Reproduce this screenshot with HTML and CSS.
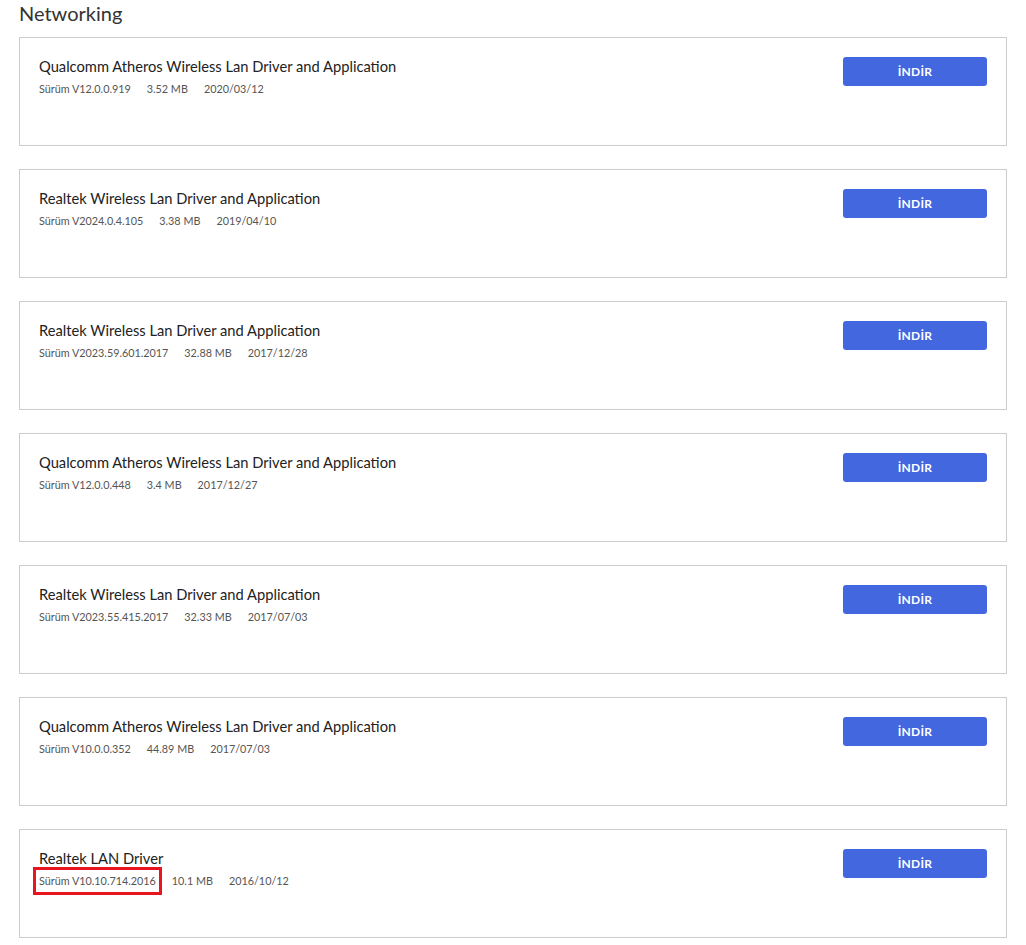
FILE: index.html
```html
<!DOCTYPE html>
<html>
<head>
  <title>Networking</title>
  <link rel="stylesheet" href="styles.css">
</head>
<body>

  <h2 class="section-title">Networking</h2>

  <div class="driver-list">
    <div class="driver">
      <div class="driver-info">
        <div class="driver-name">Qualcomm Atheros Wireless Lan Driver and Application</div>
        <div class="driver-meta">
          <span>Sürüm V12.0.0.919</span>
          <span>3.52 MB</span>
          <span>2020/03/12</span>
        </div>
      </div>
      <button class="download">İNDİR</button>
    </div>

    <div class="driver">
      <div class="driver-info">
        <div class="driver-name">Realtek Wireless Lan Driver and Application</div>
        <div class="driver-meta">
          <span>Sürüm V2024.0.4.105</span>
          <span>3.38 MB</span>
          <span>2019/04/10</span>
        </div>
      </div>
      <button class="download">İNDİR</button>
    </div>

    <div class="driver">
      <div class="driver-info">
        <div class="driver-name">Realtek Wireless Lan Driver and Application</div>
        <div class="driver-meta">
          <span>Sürüm V2023.59.601.2017</span>
          <span>32.88 MB</span>
          <span>2017/12/28</span>
        </div>
      </div>
      <button class="download">İNDİR</button>
    </div>

    <div class="driver">
      <div class="driver-info">
        <div class="driver-name">Qualcomm Atheros Wireless Lan Driver and Application</div>
        <div class="driver-meta">
          <span>Sürüm V12.0.0.448</span>
          <span>3.4 MB</span>
          <span>2017/12/27</span>
        </div>
      </div>
      <button class="download">İNDİR</button>
    </div>

    <div class="driver">
      <div class="driver-info">
        <div class="driver-name">Realtek Wireless Lan Driver and Application</div>
        <div class="driver-meta">
          <span>Sürüm V2023.55.415.2017</span>
          <span>32.33 MB</span>
          <span>2017/07/03</span>
        </div>
      </div>
      <button class="download">İNDİR</button>
    </div>

    <div class="driver">
      <div class="driver-info">
        <div class="driver-name">Qualcomm Atheros Wireless Lan Driver and Application</div>
        <div class="driver-meta">
          <span>Sürüm V10.0.0.352</span>
          <span>44.89 MB</span>
          <span>2017/07/03</span>
        </div>
      </div>
      <button class="download">İNDİR</button>
    </div>

    <div class="driver">
      <div class="driver-info">
        <div class="driver-name">Realtek LAN Driver</div>
        <div class="driver-meta">
          <span class="marked">Sürüm V10.10.714.2016</span>
          <span>10.1 MB</span>
          <span>2016/10/12</span>
        </div>
      </div>
      <button class="download">İNDİR</button>
    </div>
  </div>

</body>
</html>
```

FILE: styles.css
```css
body {
  margin: 0;
  padding: 0 19px;
  font-family: "Lato", "Open Sans", sans-serif;
  background-color: #fff;
  color: #222;
}

.section-title {
  margin: 0;
  padding-top: 1px;
  height: 37px;
  box-sizing: border-box;
  font-size: 20px;
  font-weight: 400;
  color: #333;
}

.driver-list {
  display: flex;
  flex-direction: column;
  gap: 23px;
  width: 988px;
}

.driver {
  display: flex;
  justify-content: space-between;
  align-items: flex-start;
  height: 109px;
  padding: 18px 19px 0 19px;
  border: 1px solid #ccc;
  box-sizing: border-box;
}

.driver-name {
  font-size: 14.7px;
  line-height: 20px;
  color: #222;
}

.driver-meta {
  display: flex;
  gap: 16px;
  margin-top: 5px;
  font-size: 10.8px;
  line-height: 16px;
  color: #555;
}

/* highlight around a version number */
.driver-meta .marked {
  outline: 3px solid #e8141f;
  outline-offset: 3px;
}

.download {
  width: 144px;
  height: 29px;
  margin-top: 1px;
  border: none;
  border-radius: 3px;
  background-color: #4267df;
  color: #fff;
  font-family: inherit;
  font-size: 12px;
  font-weight: 700;
  letter-spacing: 0.3px;
  cursor: pointer;
}
```
